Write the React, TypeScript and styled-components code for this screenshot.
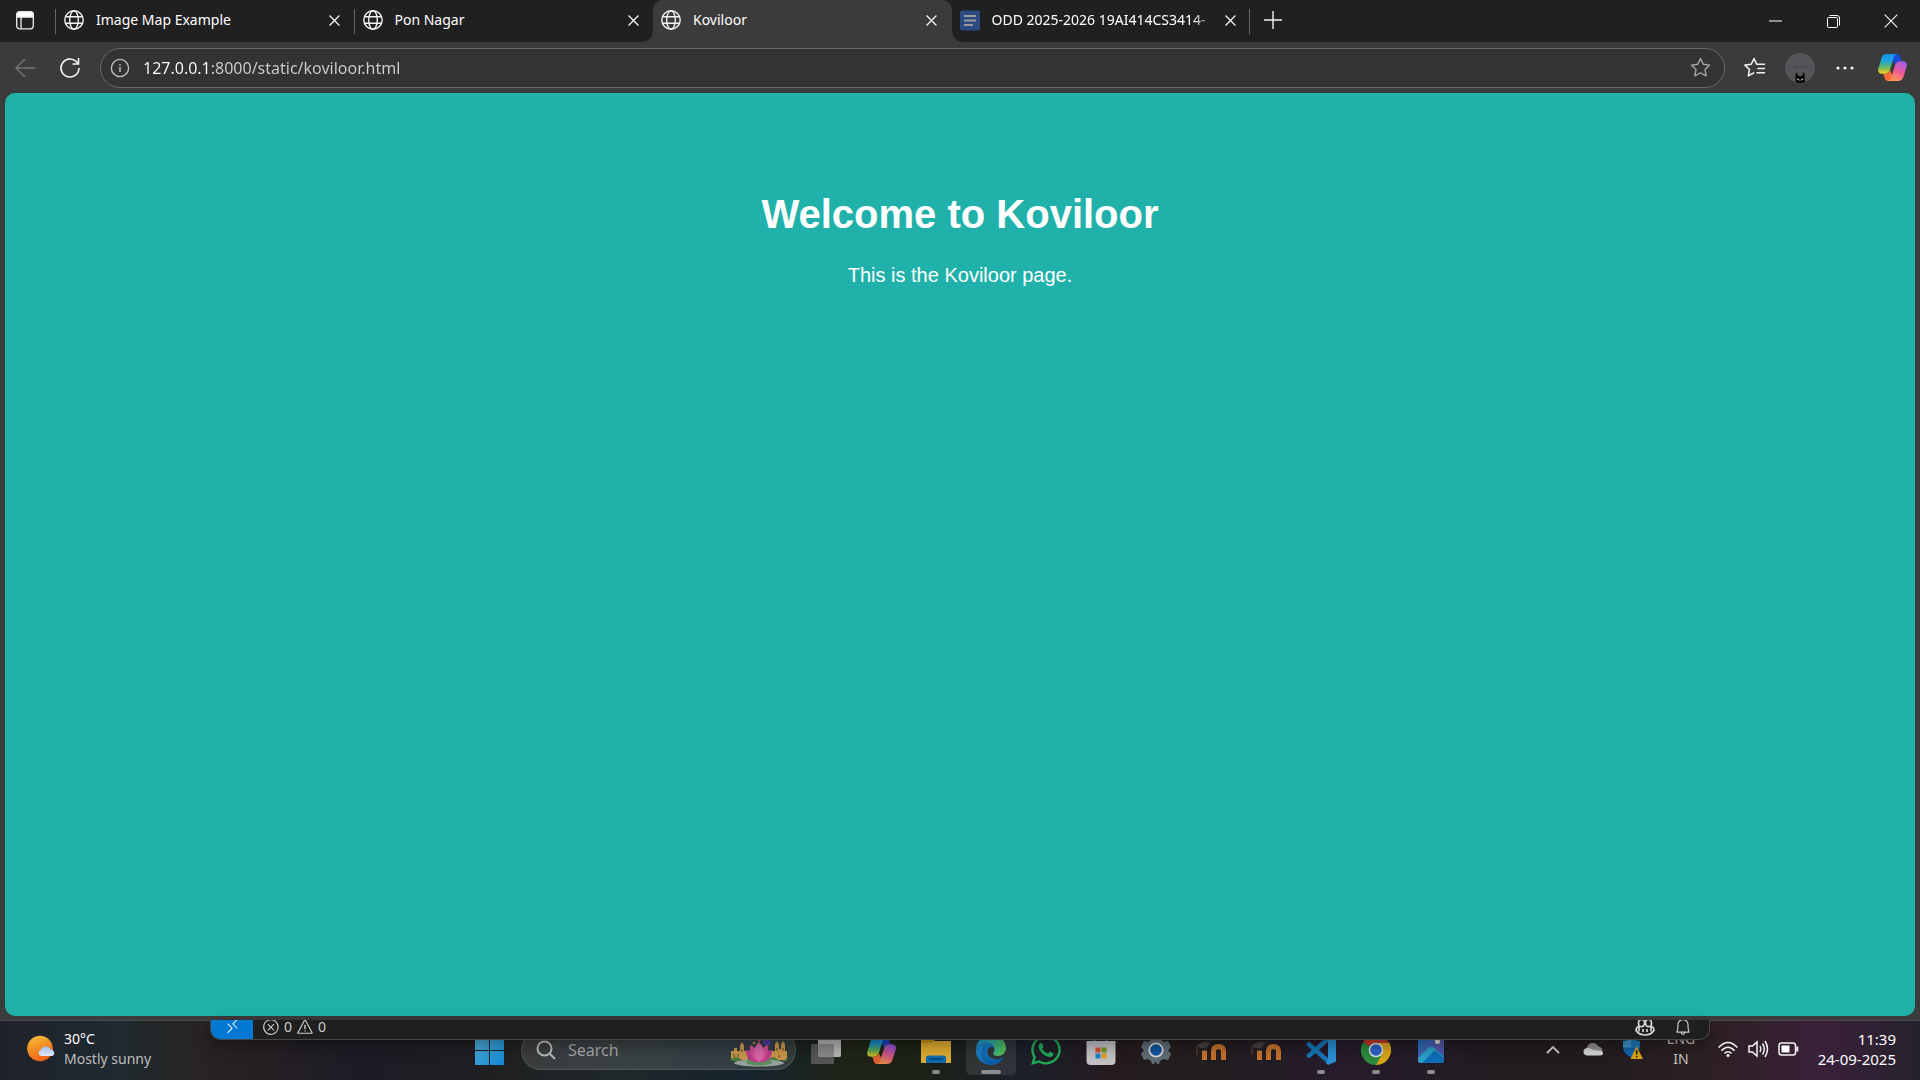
import React from "react";
import styled, { createGlobalStyle, css } from "styled-components";
import { FaWhatsapp } from "react-icons/fa";
import { VscRemote, VscError, VscWarning, VscBell } from "react-icons/vsc";

const ui = `"Noto Sans", "Open Sans", sans-serif`;

const GlobalStyle = createGlobalStyle`
  * { box-sizing: border-box; }
  body { margin: 0; background: #202020; font-family: ${ui}; color: #fff; }
  button, input { font: inherit; color: inherit; border: 0; padding: 0; background: none; outline: none; }
  button { display: flex; align-items: center; justify-content: center; }
  svg { display: block; flex: none; }
`;

/* ---------- desktop ---------- */
const Desktop = styled.div`
  display: flex;
  flex-direction: column;
  min-height: 100vh;
`;

const BrowserWindow = styled.div`
  flex: 1;
  display: flex;
  flex-direction: column;
  background: #3b3b3b;
`;

/* ---------- tab strip ---------- */
const TabStrip = styled.header`
  display: flex;
  height: 42px;
  background: #202020;
`;

const TabActions = styled.button`
  width: 50px;
  height: 40px;
`;

const Tabs = styled.div`
  display: flex;
  min-width: 0;
  flex: 0 1 1200px;
  padding-left: 6px;
`;

const Tab = styled.div<{ $active?: boolean; $line?: boolean }>`
  position: relative;
  flex: 1 1 0;
  min-width: 0;
  display: flex;
  align-items: center;
  padding: 0 9px 2px 8px;
  font-size: 14px;

  ${(p) =>
    p.$line &&
    css`
      &::after {
        content: "";
        position: absolute;
        right: 0;
        top: 9px;
        width: 1px;
        height: 25px;
        background: #666;
      }
    `}

  ${(p) =>
    p.$active &&
    css`
      background: #3b3b3b;
      border-radius: 10px 10px 0 0;
      &::before,
      &::after {
        content: "";
        position: absolute;
        bottom: 0;
        width: 10px;
        height: 10px;
      }
      &::before {
        left: -10px;
        background: radial-gradient(circle at 0 0, #202020 9px, #3b3b3b 10px);
      }
      &::after {
        right: -10px;
        background: radial-gradient(circle at 100% 0, #202020 9px, #3b3b3b 10px);
      }
    `}
`;

const StripLine = styled.span`
  width: 1px;
  height: 25px;
  margin: 9px -6px 0 5px;
  background: #666;
`;

const TabTitle = styled.button<{ $fade?: boolean }>`
  flex: 1;
  min-width: 0;
  margin-left: 12px;
  justify-content: flex-start;
  overflow: hidden;
  white-space: nowrap;
  line-height: 20px;
  ${(p) =>
    p.$fade &&
    css`
      mask-image: linear-gradient(90deg, #000 88%, transparent);
    `}
`;

const CloseButton = styled.button`
  width: 22px;
  height: 22px;
`;

const NewTab = styled.button`
  width: 42px;
  height: 40px;
  margin-left: 2px;
  margin-right: auto;
`;

const CaptionButton = styled.button`
  width: 58px;
  height: 42px;
`;

/* ---------- toolbar ---------- */
const Toolbar = styled.nav`
  display: flex;
  align-items: center;
  height: 51px;
  padding: 0 3px 0 2px;
`;

const ToolButton = styled.button`
  width: 45px;
  height: 40px;
`;

const AddressBar = styled.label`
  flex: 1;
  display: flex;
  align-items: center;
  gap: 13px;
  height: 40px;
  margin: 0 7px 0 8px;
  padding: 0 12px 0 9px;
  border: 1px solid #6a6a6a;
  border-radius: 20px;
  background: #333;
`;

const AddressInput = styled.input`
  flex: 1;
  min-width: 0;
  height: 26px;
  font-size: 16px;
  background: linear-gradient(90deg, #fff 68px, #cfcfcf 68px);
  background-clip: text;
  color: transparent;
`;

const CopilotButton = styled.button`
  width: 50px;
  height: 40px;
`;

/* ---------- page ---------- */
const PageFrame = styled.div`
  flex: 1;
  display: flex;
  padding: 0 5px 4px;
`;

const Page = styled.main`
  flex: 1;
  padding-top: 100px;
  border-radius: 10px;
  background: #20b2aa;
  font-family: "Liberation Sans", Arial, sans-serif;
  text-align: center;
`;

const Heading = styled.h1`
  margin: 0;
  font-size: 40px;
  line-height: 43px;
`;

const Lead = styled.p`
  margin: 28px 0 0;
  font-size: 20px;
  line-height: 23px;
`;

/* ---------- taskbar ---------- */
const Taskbar = styled.footer`
  position: relative;
  display: grid;
  grid-template-columns: 1fr auto 1fr;
  height: 60px;
  box-shadow: inset 0 1px #4a4a4a;
  background: linear-gradient(
    90deg,
    #20222a 0%,
    #1f2a30 6%,
    #272523 10%,
    #282122 12%,
    #1c1c26 19%,
    #1f2021 26%,
    #20282a 32%,
    #16232c 39%,
    #1f2418 44%,
    #1c2314 47%,
    #1b202a 53%,
    #251a1f 58%,
    #221e1d 61%,
    #261b2b 70%,
    #211c20 78%,
    #211c20 83%,
    #2d2022 89%,
    #3a2039 95%,
    #25222d 100%
  );
`;

const Weather = styled.button`
  justify-self: start;
  gap: 8px;
  height: 58px;
  padding-left: 27px;
  text-align: left;
`;

const TwoLines = styled.span<{ $align: string; $dim?: boolean; $size?: number }>`
  display: flex;
  flex-direction: column;
  text-align: ${(p) => p.$align};
  font-size: ${(p) => p.$size ?? 14}px;
  line-height: 20px;
  color: ${(p) => (p.$dim ? "#c4c2c4" : "#fff")};
`;

const Muted = styled.span`
  color: #bdbdbd;
`;

const Apps = styled.div`
  display: flex;
  align-items: center;
  gap: 5px;
`;

const AppButton = styled.button<{ $active?: boolean; $mark?: number }>`
  position: relative;
  width: 50px;
  height: 50px;
  border-radius: 5px;
  background: ${(p) => (p.$active ? "rgba(255,255,255,0.09)" : "none")};
  ${(p) =>
    p.$mark &&
    css`
      &::after {
        content: "";
        position: absolute;
        bottom: 1px;
        left: calc(50% - ${p.$mark / 2}px);
        width: ${p.$mark}px;
        height: 4px;
        border-radius: 2px;
        background: #8f8d8f;
      }
    `}
`;

const SearchBox = styled.label`
  display: flex;
  align-items: center;
  gap: 12px;
  width: 275px;
  height: 40px;
  margin-left: 2px;
  padding: 0 7px 0 14px;
  border: 1px solid rgba(255, 255, 255, 0.12);
  border-radius: 20px;
  background: rgba(255, 255, 255, 0.12);
`;

const SearchInput = styled.input`
  flex: 1;
  min-width: 0;
  font-size: 16px;
  &::placeholder {
    color: #a6a8a8;
    opacity: 1;
  }
`;

const Tray = styled.div`
  display: flex;
  align-items: center;
  justify-content: flex-end;
  height: 58px;
  padding-right: 24px;
`;

const TrayButton = styled.button<{ $w: number }>`
  width: ${(p) => p.$w}px;
  height: 50px;
`;

const ClockButton = styled.button`
  width: 89px;
  height: 50px;
  justify-content: flex-end;
`;

/* Lower edge of the editor window that peeks out behind the browser. */
const EditorEdge = styled.div`
  position: absolute;
  top: 0;
  left: 210px;
  right: 210px;
  height: 20px;
  overflow: hidden;
  display: flex;
  align-items: flex-start;
  border: 1px solid #484848;
  border-top: 0;
  border-radius: 0 0 10px 10px;
  background: #1f1f1f;
  box-shadow: 0 6px 16px rgba(0, 0, 0, 0.35);
  color: #ccc;
  font-size: 14px;
  line-height: 13px;
`;

const RemoteButton = styled.button`
  width: 42px;
  height: 20px;
  padding-bottom: 7px;
  background: #0078d4;
  color: #fff;
`;

const Problems = styled.button`
  gap: 4px;
  height: 13px;
  margin: 0 auto 0 9px;
`;

const EdgeButton = styled.button`
  width: 38px;
  height: 13px;
  &:last-child {
    margin-right: 7px;
  }
`;

/* ---------- drawings ---------- */
const Globe = () => (
  <svg width="20" height="26" viewBox="0 0 20 26" fill="none" stroke="#f2f2f2" strokeWidth="1.4">
    <circle cx="10" cy="13" r="9.2" />
    <ellipse cx="10" cy="13" rx="4.3" ry="9.2" />
    <path d="M1.6 9.8h16.8M1.6 16.2h16.8" />
  </svg>
);

const DocIcon = () => (
  <svg width="20" height="21" viewBox="0 0 20 21">
    <rect width="20" height="20" y=".5" rx="2" fill="#2b4a82" />
    <path d="M4 6h12M4 10.5h12M4 15h9" stroke="#9a9a9a" strokeWidth="2.2" />
  </svg>
);

const Cross = ({ size = 11, w = 1.4 }: { size?: number; w?: number }) => (
  <svg width={size} height={size} viewBox="0 0 12 12" stroke="#f4f4f4" strokeWidth={w}>
    <path d="M.6.6l10.8 10.8M11.4.6L.6 11.4" />
  </svg>
);

const STAR = "M12 2.6l2.9 6 6.6.9-4.8 4.6 1.2 6.6-5.9-3.2-5.9 3.2 1.2-6.6L2.500 9.500l6.600-.9z";

const Copilot = ({ size, id, dim }: { size: number; id: string; dim?: boolean }) => (
  <svg width={size} height={size} viewBox="0 -1 28 28" opacity={dim ? 0.85 : 1}>
    <defs>
      <linearGradient id={`${id}a`} x1="0" y1="0" x2="0" y2="1">
        <stop offset="0" stopColor="#1590f0" />
        <stop offset=".35" stopColor="#1ea4e0" />
        <stop offset=".7" stopColor="#6dbb58" />
        <stop offset="1" stopColor="#ffd21f" />
      </linearGradient>
      <linearGradient id={`${id}b`} x1=".7" y1="0" x2=".3" y2="1">
        <stop offset="0" stopColor="#a25cf0" />
        <stop offset=".5" stopColor="#ee5a96" />
        <stop offset="1" stopColor="#ff9a52" />
      </linearGradient>
    </defs>
    <path d="M14 0h4.500c1.800 0 2.500 1.200 3 2.800L22.800 7H21c-2.600 0-3.700 1-4.500 3.500L14 5z" fill="#1949d8" />
    <path d="M14 26H9.500c-1.800 0-2.500-1.200-3-2.800L5.200 19H7c2.600 0 3.700-1 4.500-3.500L14 21z" fill="#ff6b35" />
    <path d="M8.500 0H18.500c-1.800.3-2.800 1.600-3.500 4l-3.300 10.800C10.800 17.800 9.500 19 6.500 19H4C.8 19-.5 17 .3 14L3.400 4C4.200 1.300 5.600 0 8.500 0z" fill={`url(#${id}a)`} />
    <path d="M19.500 26H9.500c1.800-.3 2.800-1.600 3.500-4l3.300-10.800C17.200 8.200 18.500 7 21.500 7H24c3.200 0 4.500 2 3.700 5L24.600 22c-.8 2.700-2.200 4-5.100 4z" fill={`url(#${id}b)`} />
  </svg>
);

const Profile = () => (
  <svg width="30" height="30" viewBox="0 0 30 30">
    <circle cx="15" cy="15" r="15" fill="#565458" />
    <path d="M9 14h13" stroke="#444246" strokeWidth="1.500" strokeDasharray="2 1" />
    <path d="M10.500 29V22l.8-3 2 4h3.600l2-4 .8 3v7q-4.600 2-9.200 0z" fill="#080808" />
    <path d="M12 26l2.500 1.200M18.200 26l-2.500 1.200" stroke="#ddd" strokeWidth="1" />
  </svg>
);

const WeatherIcon = () => (
  <svg width="29" height="28" viewBox="0 0 29 28">
    <defs>
      <linearGradient id="sun" x1="0" y1="0" x2=".4" y2="1">
        <stop offset="0" stopColor="#f7c23a" />
        <stop offset="1" stopColor="#ee6412" />
      </linearGradient>
      <linearGradient id="cloud" x1="0" y1="0" x2="0" y2="1">
        <stop offset="0" stopColor="#9fbdf2" />
        <stop offset="1" stopColor="#dfe9fb" />
      </linearGradient>
    </defs>
    <circle cx="13" cy="13.500" r="12.800" fill="url(#sun)" />
    <path d="M14 21a3.500 3.500 0 010-6.600 5.300 5.300 0 019.600.2A3.300 3.300 0 0125 21z" fill="url(#cloud)" />
  </svg>
);

const StartIcon = () => (
  <svg width="29" height="29" viewBox="0 0 29 29">
    <defs>
      <linearGradient id="win" x1="0" y1="0" x2="1" y2="1">
        <stop offset="0" stopColor="#57b2d6" />
        <stop offset="1" stopColor="#0f86d6" />
      </linearGradient>
    </defs>
    <path d="M0 0h14v14H0zM15 0h14v14H15zM0 15h14v14H0zM15 15h14v14H15z" fill="url(#win)" />
  </svg>
);

const Lotus = () => (
  <svg width="58" height="38" viewBox="0 0 58 38">
    <g fill="#7b4fae">
      <circle cx="21" cy="8" r="1.500" />
      <circle cx="37" cy="11" r="4" fill="#4b3f9c" />
      <circle cx="29" cy="9" r="1.600" fill="#c9506b" />
      <circle cx="42" cy="8" r="1.300" fill="#3d8fa8" />
      <circle cx="24" cy="12" r="1.300" fill="#c98a3c" />
      <circle cx="33" cy="8" r="1.300" fill="#d07a3c" />
    </g>
    <path d="M1 29V20h3v-3h3v3h3v-6l2-3 2 3v6h4v9zM57 29V20h-2v-7l-2-3-2 3v5h-2v-5l-2-3-2 3v7h-6v9z" fill="#c9964a" />
    <path d="M4 23v3M8 23v3M12 18v3M47 17v3M53 17v3M49 24v3" stroke="#6b4a26" strokeWidth="1" />
    <path d="M1 28q5-4 10 0t8 0h20q4-4 8 0t10-1v3H1z" fill="#4c7a3a" />
    <ellipse cx="29" cy="32" rx="25" ry="3.500" fill="#93a39c" />
    <ellipse cx="29" cy="31" rx="13" ry="3.500" fill="#5b8d5f" />
    <path d="M29 31C20 32 16 27 16 19c4 0 7 2 8 4 4-1 6-1 10 0 1-2 4-4 8-4 0 8-4 13-13 12z" fill="#b93d88" />
    <path d="M29 31c-7-2-10-9-9-17 4 1 8 5 9 10 1-5 5-9 9-10 1 8-2 15-9 17z" fill="#cf4d97" />
    <path d="M29 31c-6-5-7-13 0-20 7 7 6 15 0 20z" fill="#db65a8" />
  </svg>
);

const TaskView = () => (
  <svg width="30" height="30" viewBox="0 0 30 30">
    <rect x="7" y="1" width="23" height="21" rx="1.500" fill="#b4b4b4" />
    <rect y="9" width="23" height="20" rx="1.500" fill="#555" />
    <path d="M7 9h16v13H8.500A1.500 1.500 0 017 20.500z" fill="#8a8a8a" />
  </svg>
);

const Folder = () => (
  <svg width="30" height="30" viewBox="0 0 30 30">
    <path d="M0 3h11l3 3h16v22H0z" fill="#c8921c" />
    <path d="M0 8h11l3-2h16v22H0z" fill="#dfab30" />
    <path d="M5 28v-5q0-2.500 2.500-2.500h15q2.500 0 2.500 2.500v5z" fill="#0f6cae" />
    <path d="M8.500 24h13" stroke="#084473" strokeWidth="1.500" />
  </svg>
);

const Edge = () => (
  <svg width="30" height="30" viewBox="0 0 30 30">
    <defs>
      <linearGradient id="edgeTop" x1="0" y1=".3" x2="1" y2=".5">
        <stop offset="0" stopColor="#2298d4" />
        <stop offset=".5" stopColor="#30b0a6" />
        <stop offset="1" stopColor="#55bd50" />
      </linearGradient>
      <linearGradient id="edgeLow" x1="0" y1="0" x2="1" y2="1">
        <stop offset="0" stopColor="#1f8fd8" />
        <stop offset="1" stopColor="#0b4f92" />
      </linearGradient>
    </defs>
    <path d="M0 14C1 5 7 0 15 0c9 0 15 6 15 13 0 5-4 8-8 8-3 0-5-1-5-2.500 0-1 1.500-1.500 1.500-4C18.500 11 15 8 10 8c-5 0-9 3-10 6z" fill="url(#edgeTop)" />
    <path d="M0 15C1 10 5 7.500 10 7.500c5 0 8 2.500 8.500 6-1-1.200-2.500-1.800-4-1.300-2.700.8-4 4-2.500 7.300C14 24 21 26 28 22c-3 5-8 8-13 8C6 30-.5 23 0 15z" fill="url(#edgeLow)" />
    <path d="M11 9c-4 5-3 12 2 16 4 3 10 2 15-3-3 5-8 8-13 8-6-1-10-6-9.500-12C6 14 8 11 11 9z" fill="#0c5ba6" opacity=".6" />
  </svg>
);

const Store = () => (
  <svg width="30" height="32" viewBox="0 0 30 32">
    <path d="M8.500 9V3q0-2 2-2h8q2 0 2 2v6" fill="none" stroke="#2788ad" strokeWidth="2" />
    <path d="M.5 7h29v20q0 4-4 4h-21q-4 0-4-4z" fill="#c3c0c3" />
    <path d="M9.500 13.500h5v5h-5z" fill="#d4502c" />
    <path d="M15.500 13.500h5v5h-5z" fill="#6e9c1c" />
    <path d="M9.500 19.500h5v5h-5z" fill="#1583c9" />
    <path d="M15.500 19.500h5v5h-5z" fill="#dba01a" />
  </svg>
);

const Gear = () => (
  <svg width="30" height="30" viewBox="0 0 30 30">
    <path d="M11 1h8l1 4 3 2 4-1 3 6-3 3 3 4-3 6-5-1-3 2-1 3h-2l-1-2h-1l-1 2h-2l-1-3-3-2-4 1-3-6 3-4-3-3 3-6 4 1 3-2z" fill="#5f6b76" />
    <circle cx="15" cy="15" r="7.600" fill="#d6d6d8" />
    <circle cx="15" cy="15" r="5.800" fill="#0f549c" />
  </svg>
);

const Moodle = () => (
  <svg width="30" height="30" viewBox="0 0 30 30" fill="none">
    <path d="M8.500 25v-9.500M17.500 25v-8.500q0-5 5-5t5 5V25" stroke="#c2722a" strokeWidth="5" />
    <path d="M1 10l8-3.500 5 1.500-4 5.500-6-.5z" fill="#45403f" />
    <path d="M1.500 11q-1 4 0 9" stroke="#57392c" strokeWidth="1.500" />
  </svg>
);

const Code = () => (
  <svg width="30" height="30" viewBox="0 0 30 30">
    <path d="M3 20.500L22 4M3 9.500L22 26" stroke="#1674b8" strokeWidth="4.500" strokeLinecap="round" />
    <path d="M22 0l8 3.500v23L22 30l-2-2 2-4V6l-2-4z" fill="#2a8fd2" />
  </svg>
);

const Chrome = () => (
  <svg width="30" height="30" viewBox="0 0 30 30">
    <path d="M15 15L2 7.500A15 15 0 0128 7.500z" fill="#c3392b" />
    <path d="M15 15l13-7.500A15 15 0 0115 30z" fill="#d8a518" />
    <path d="M15 15v15A15 15 0 012 7.500z" fill="#2a8a3e" />
    <path d="M15 8h13.300q3 7 0 13L15 30l6.500-11z" fill="#d8a518" />
    <path d="M8.700 18.500L2 7.500q-4 8 0 15 5 7.500 13 7.500l6.300-11z" fill="#2a8a3e" />
    <circle cx="15" cy="15" r="7.300" fill="#ddd" />
    <circle cx="15" cy="15" r="5.800" fill="#2a63c4" />
  </svg>
);

const Photos = () => (
  <svg width="26" height="28" viewBox="0 0 26 28">
    <defs>
      <linearGradient id="sky" x1="0" y1="0" x2="1" y2="1">
        <stop offset="0" stopColor="#1474c4" />
        <stop offset=".6" stopColor="#5a55a8" />
        <stop offset="1" stopColor="#1e5fb0" />
      </linearGradient>
    </defs>
    <rect width="26" height="27" rx="3" fill="url(#sky)" />
    <circle cx="19.500" cy="5.500" r="2.500" fill="#ddd" />
    <path d="M0 22L10 12q3-3 6 0l10 9v3q0 3-3 3H3q-3 0-3-3z" fill="#2aa0c8" />
    <path d="M4 27L15 16q2-2 4 0l7 6v2q0 3-3 3z" fill="#0d6db8" />
  </svg>
);

const Robot = () => (
  <svg width="20" height="20" viewBox="0 0 20 20" fill="none" stroke="#d4d4d4" strokeWidth="1.700">
    <path d="M4 9q-1.500-6 2-6.500Q9.700 2 9.500 6T6 9.500 4 9zM16 9q1.500-6-2-6.500-3.700-.5-3.500 3.500t3.500 3.500T16 9z" />
    <path d="M3.500 9.500Q1 10.500 1 13.500 4 18 10 18t9-4.500q0-3-2.500-4M4 9.500v5M16 9.500v5M8 12v3M12 12v3" />
  </svg>
);

const Shield = () => (
  <svg width="22" height="22" viewBox="0 0 22 22">
    <path d="M1 3q5 0 8.500-3Q13 3 18 3v6q0 7-8.500 10.500Q1 16 1 9z" fill="#1263ad" />
    <path d="M1 3q5 0 8.500-3v9.500H1z" fill="#3b93c9" />
    <path d="M9.500 0Q13 3 18 3v6.500H9.500z" fill="#1d78bd" />
    <path d="M14.500 8L21 21H8.500z" fill="#dba414" />
    <path d="M14.700 12v4.500M14.700 18v1.500" stroke="#221c10" strokeWidth="1.500" />
  </svg>
);

const tabs = [
  { title: "Image Map Example", line: true },
  { title: "Pon Nagar" },
  { title: "Koviloor", active: true },
  { title: "ODD 2025-2026 19AI414CS3414-", line: true, doc: true },
];

const apps: { name: string; icon: React.ReactNode; mark?: number; active?: boolean }[] = [
  { name: "Task view", icon: <TaskView /> },
  { name: "Copilot", icon: <Copilot size={29} id="task" dim /> },
  { name: "File Explorer", icon: <Folder />, mark: 8 },
  { name: "Edge", icon: <Edge />, mark: 20, active: true },
  { name: "WhatsApp", icon: <FaWhatsapp size={34} color="#1fa855" /> },
  { name: "Store", icon: <Store /> },
  { name: "Settings", icon: <Gear /> },
  { name: "Moodle", icon: <Moodle /> },
  { name: "Moodle course", icon: <Moodle /> },
  { name: "Code", icon: <Code />, mark: 8 },
  { name: "Chrome", icon: <Chrome />, mark: 8 },
  { name: "Photos", icon: <Photos />, mark: 8 },
];

export default function App() {
  return (
    <Desktop>
      <GlobalStyle />
      <BrowserWindow>
        <TabStrip>
          <TabActions aria-label="Tab actions">
            <svg width="18" height="19" viewBox="0 0 18 19" fill="none" stroke="#eee" strokeWidth="1.300">
              <rect x=".7" y="1" width="16.600" height="16.800" rx="3" />
              <path d="M1 3q0-2 2-2h12q2 0 2 2v3H1z" fill="#fff" />
              <path d="M5 6v11.500" />
            </svg>
          </TabActions>
          <StripLine />
          <Tabs>
            {tabs.map((t) => (
              <Tab key={t.title} $active={t.active} $line={t.line}>
                {t.doc ? <DocIcon /> : <Globe />}
                <TabTitle $fade={t.doc}>{t.title}</TabTitle>
                <CloseButton aria-label={`Close ${t.title}`}>
                  <Cross />
                </CloseButton>
              </Tab>
            ))}
          </Tabs>
          <NewTab aria-label="New tab">
            <svg width="18" height="18" viewBox="0 0 18 18" stroke="#f2f2f2" strokeWidth="1.400">
              <path d="M9 0v18M0 9h18" />
            </svg>
          </NewTab>
          <CaptionButton aria-label="Minimize">
            <svg width="13" height="13" viewBox="0 0 13 13">
              <path d="M0 6h13" stroke="#fff" />
            </svg>
          </CaptionButton>
          <CaptionButton aria-label="Restore">
            <svg width="13" height="13" viewBox="0 0 13 13" fill="none" stroke="#fff">
              <rect x=".5" y="2.500" width="10" height="10" rx="1" />
              <path d="M2.500.5H10q2.500 0 2.500 2.500v7.500" />
            </svg>
          </CaptionButton>
          <CaptionButton aria-label="Close window">
            <Cross size={14} w={1} />
          </CaptionButton>
        </TabStrip>

        <Toolbar>
          <ToolButton aria-label="Back">
            <svg width="20" height="20" viewBox="0 0 20 20" fill="none" stroke="#777" strokeWidth="1.400">
              <path d="M20 10H1M10 1L1 10l9 9" />
            </svg>
          </ToolButton>
          <ToolButton aria-label="Refresh">
            <svg width="22" height="22" viewBox="0 0 22 22" fill="none" stroke="#f2f2f2" strokeWidth="1.600">
              <path d="M20 11a9 9 0 11-3-6.700L19 6.500M19.500 1v6h-6" />
            </svg>
          </ToolButton>
          <AddressBar>
            <svg width="20" height="20" viewBox="0 0 20 20" fill="none" stroke="#c4c4c4" strokeWidth="1.300">
              <circle cx="10" cy="10" r="8.600" />
              <path d="M10 9v5M10 6v1.500" strokeWidth="1.500" />
            </svg>
            <AddressInput aria-label="Address" defaultValue="127.0.0.1:8000/static/koviloor.html" />
            <svg width="23" height="23" viewBox="0 0 24 24" fill="none" stroke="#a8a8a8" strokeWidth="1.400" strokeLinejoin="round">
              <path d={STAR} />
            </svg>
          </AddressBar>
          <ToolButton aria-label="Favorites">
            <svg width="23" height="23" viewBox="0 0 24 24" fill="none" stroke="#f2f2f2" strokeWidth="1.600" strokeLinejoin="round">
              <path d="M11.500 17.500l-6 3.200 1.200-6.600L2 9.500l6.600-.9 2.900-6 2.800 5.900H23M15 13h8M14 17.500h9" />
            </svg>
          </ToolButton>
          <ToolButton aria-label="Profile">
            <Profile />
          </ToolButton>
          <ToolButton aria-label="More">
            <svg width="18" height="4" viewBox="0 0 18 4" fill="#f2f2f2">
              <circle cx="2" cy="2" r="1.600" />
              <circle cx="9" cy="2" r="1.600" />
              <circle cx="16" cy="2" r="1.600" />
            </svg>
          </ToolButton>
          <CopilotButton aria-label="Copilot">
            <Copilot size={29} id="bar" />
          </CopilotButton>
        </Toolbar>

        <PageFrame>
          <Page>
            <Heading>Welcome to Koviloor</Heading>
            <Lead>This is the Koviloor page.</Lead>
          </Page>
        </PageFrame>
      </BrowserWindow>

      <Taskbar>
        <Weather>
          <WeatherIcon />
          <TwoLines $align="left">
            <span>30°C</span>
            <Muted>Mostly sunny</Muted>
          </TwoLines>
        </Weather>

        <Apps>
          <AppButton aria-label="Start">
            <StartIcon />
          </AppButton>
          <SearchBox>
            <svg width="20" height="20" viewBox="0 0 20 20" fill="none" stroke="#b8baba" strokeWidth="2">
              <circle cx="8.500" cy="8.500" r="7" />
              <path d="M13.500 13.500L19 19" />
            </svg>
            <SearchInput placeholder="Search" aria-label="Search" />
            <Lotus />
          </SearchBox>
          {apps.map((a) => (
            <AppButton key={a.name} aria-label={a.name} $active={a.active} $mark={a.mark}>
              {a.icon}
            </AppButton>
          ))}
        </Apps>

        <Tray>
          <TrayButton $w={40} aria-label="Hidden icons">
            <svg width="14" height="9" viewBox="0 0 14 9" fill="none" stroke="#d0d0d0" strokeWidth="1.800">
              <path d="M1 8l6-6 6 6" />
            </svg>
          </TrayButton>
          <TrayButton $w={40} aria-label="OneDrive">
            <svg width="20" height="14" viewBox="0 0 20 14">
              <path d="M4 13a4 4 0 010-7.500A6 6 0 0115 4q5 1.500 4.500 6z" fill="#8f8f8f" />
              <path d="M4 13.500Q.500 13 .500 9.500T5 6q3 0 5 2l8.500 1q1.500 1 1.500 2 0 2.500-3 2.500z" fill="#d6d6d6" />
            </svg>
          </TrayButton>
          <TrayButton $w={40} aria-label="Security">
            <Shield />
          </TrayButton>
          <TrayButton $w={56} aria-label="Input language">
            <TwoLines $align="center" $dim>
              <span>ENG</span>
              <span>IN</span>
            </TwoLines>
          </TrayButton>
          <TrayButton $w={38} aria-label="Network">
            <svg width="20" height="17" viewBox="0 0 20 17" fill="none" stroke="#f2f2f2" strokeWidth="1.600">
              <path d="M.6 6.500q9.400-10 18.800 0M3.500 9.700q6.500-7 13 0M6.500 12.500q3.500-3.500 7 0" />
              <circle cx="10" cy="14.500" r="1.500" fill="#f2f2f2" stroke="none" />
            </svg>
          </TrayButton>
          <TrayButton $w={22} aria-label="Volume">
            <svg width="21" height="18" viewBox="0 0 21 18" fill="none" stroke="#f2f2f2" strokeWidth="1.500">
              <path d="M1 6h3.500L9 2v14l-4.500-4H1zM12 6q1.500 3 0 6M14.500 3.500q3.500 5.500 0 11M17 1q5 8 0 16" />
            </svg>
          </TrayButton>
          <TrayButton $w={38} aria-label="Battery">
            <svg width="21" height="14" viewBox="0 0 21 14" fill="none" stroke="#f2f2f2" strokeWidth="1.500">
              <rect x="1" y="1" width="16.500" height="12" rx="2.500" />
              <path d="M3.500 3.500h8v7h-8z" fill="#fff" stroke="none" />
              <path d="M19.300 4.500v5" strokeWidth="2" />
            </svg>
          </TrayButton>
          <ClockButton>
            <TwoLines $align="right" $size={15}>
              <span>11:39</span>
              <span>24-09-2025</span>
            </TwoLines>
          </ClockButton>
        </Tray>

        <EditorEdge>
          <RemoteButton aria-label="Remote">
            <VscRemote size={17} />
          </RemoteButton>
          <Problems>
            <VscError size={18} />
            <span>0</span>
            <VscWarning size={18} />
            <span>0</span>
          </Problems>
          <EdgeButton aria-label="Copilot status">
            <Robot />
          </EdgeButton>
          <EdgeButton aria-label="Notifications">
            <VscBell size={18} />
          </EdgeButton>
        </EditorEdge>
      </Taskbar>
    </Desktop>
  );
}
